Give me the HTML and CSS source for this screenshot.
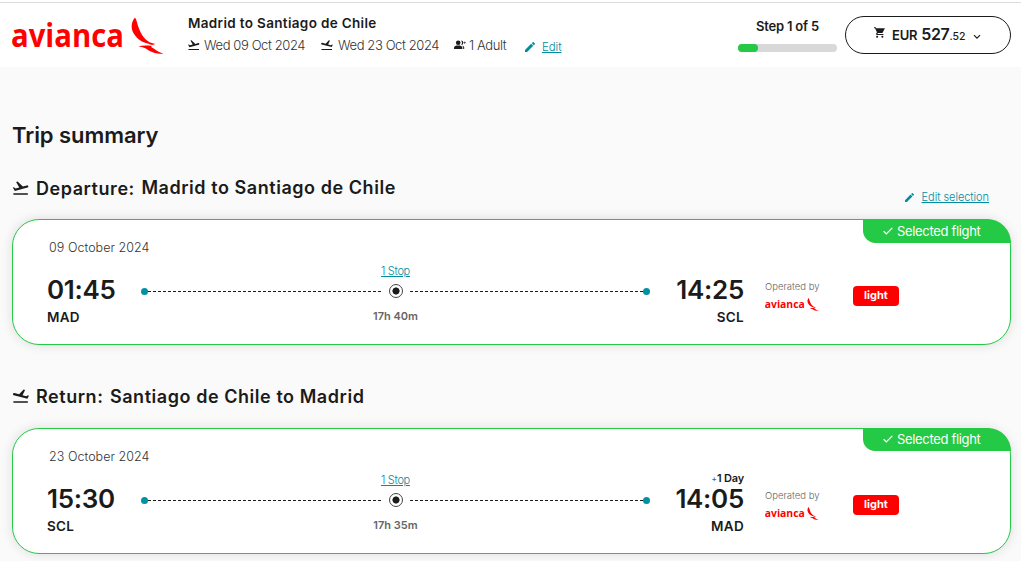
FILE: index.html
```html
<!DOCTYPE html>
<html lang="en">
<head>
  <meta charset="UTF-8" />
  <meta name="viewport" content="width=device-width, initial-scale=1.0" />
  <title>Trip summary</title>
  <link rel="stylesheet" href="styles.css">
</head>
<body>
  <svg class="sprite">
    <symbol id="takeoff" viewBox="2 3 21 18"><path d="M2.5 19h19v2h-19zm19.57-9.36c-.21-.8-1.04-1.28-1.84-1.06L14.92 10l-6.9-6.43-1.93.51 4.14 7.17-4.97 1.33-1.97-1.54-1.45.39 2.59 4.49 16.61-4.46c.81-.23 1.28-1.05 1.03-1.85z"/></symbol>
    <symbol id="landing" viewBox="2 3 21 18"><path d="M2.500 19h19v2h-19zM2 9.200c.21-.8 1.040-1.280 1.840-1.060L10 9.800l5.900-6.230 1.930.51-3.300 6.900 4.970 1.330 1.970-1.140 1.450.39-2 4.090L3 11.100c-.8-.2-1.200-1-1-1.900z"/></symbol>
    <symbol id="pencil" viewBox="3 3 18 18"><path d="M3 17.250V21h3.750L17.810 9.940l-3.750-3.750zM20.710 7.040a1 1 0 0 0 0-1.410l-2.340-2.340a1 1 0 0 0-1.410 0l-1.830 1.830 3.750 3.750z"/></symbol>
    <symbol id="bird" viewBox="0 0 33 37"><path d="M4 .5C1.500 3 .4 7 .7 10.700 1 14 2.500 16.500 4 18.300c1.500 2 3 3.600 5 5 2.500 1.800 5 2.700 8 3.200 2 1 4.500 1.800 7.700 1.700l-3.200-.9 3.300-.2c-2.500-.7-4.500-1.300-6.300-1.900-2.500-1.500-4.500-3.500-6.200-5.500-2-3-3.600-6-5-10C6 6.500 6 3.500 4 .5zM7.300 29.300c3 .7 5.700 1.400 8.400 2.600 3.300 2.500 7 4.500 16.800 5.100-3.500-1.300-6.500-3-9-4.900l-3.300-2.100.6-1c-4-.6-9-.7-13.500.3z"/></symbol>
    <symbol id="logo" viewBox="0 -8 152 48">
      <text x="-1" y="30" textLength="113" lengthAdjust="spacingAndGlyphs" font-family="Open Sans, Noto Sans, sans-serif" font-weight="700" font-size="32">avianca</text>
      <use href="#bird" x="119" y="0" width="33" height="37"/>
    </symbol>
    <symbol id="check" viewBox="0 0 10 8"><path d="M.7 4.300 3.300 6.900 9.300.9" fill="none" stroke="currentColor" stroke-width="1.300"/></symbol>
  </svg>

  <header class="topbar">
    <svg class="logo"><use href="#logo"/></svg>
    <div class="search">
      <div class="route">Madrid to Santiago de Chile</div>
      <div class="details">
        <span class="date"><svg class="plane"><use href="#takeoff"/></svg><span>Wed 09 Oct 2024</span></span>
        <span class="date"><svg class="plane"><use href="#landing"/></svg><span>Wed 23 Oct 2024</span></span>
        <span class="pax"><svg viewBox="0 0 12 10"><circle cx="4.200" cy="2.800" r="2.300"/><path d="M0 9V7.800C0 6 2 5.500 4.200 5.500S8.400 6 8.400 7.800V9zM7 .5a2.300 2.300 0 0 1 0 4.600 3.500 3.500 0 0 0 0-4.600zM8.200 5.700c1.500.4 2 1 2 2.100V9h-1V7.800c0-1-.3-1.500-1-2.100zM9.500 2.500h1v-1h.6v1h1v.6h-1v1h-.6v-1h-1z"/></svg><span>1 Adult</span></span>
        <a class="edit" href="#"><svg><use href="#pencil"/></svg><span>Edit</span></a>
      </div>
    </div>
    <div class="steps">
      <div class="steps-label">Step 1 of 5</div>
      <div class="steps-bar"><div class="steps-done"></div></div>
    </div>
    <button class="basket">
      <svg class="cart" viewBox="1 2 21 20"><path d="M7 18a2 2 0 1 0 0 4 2 2 0 0 0 0-4zM1 2v2h2l3.600 7.590-1.350 2.450C4.500 15.400 5.500 17 7 17h12v-2H7.400l1.100-2h7.450c.75 0 1.400-.4 1.750-1L21.800 4H5.200l-.9-2zm16 16a2 2 0 1 0 0 4 2 2 0 0 0 0-4z"/></svg>
      <span class="currency">EUR</span><span class="amount">527</span><span class="cents">.52</span>
      <svg class="chevron" viewBox="0 0 8 6"><path d="M1 1.200 4 4.200 7 1.200"/></svg>
    </button>
  </header>

  <main class="page">
    <h1>Trip summary</h1>

    <section class="trip">
      <div class="trip-head">
        <h2><svg><use href="#takeoff"/></svg><span class="way">Departure:</span><span class="cities">Madrid to Santiago de Chile</span></h2>
        <a class="edit-selection" href="#"><svg><use href="#pencil"/></svg><span>Edit selection</span></a>
      </div>
      <div class="card">
        <div class="selected"><svg><use href="#check"/></svg><span>Selected flight</span></div>
        <div class="day">09 October 2024</div>
        <div class="flight">
          <div class="from"><div class="time">01:45</div><div class="code">MAD</div></div>
          <div class="path">
            <a class="stops" href="#">1 Stop</a>
            <div class="line"><i class="dot"></i><i class="dash"></i><i class="stop"></i><i class="dash"></i><i class="dot"></i></div>
            <div class="duration">17h 40m</div>
          </div>
          <div class="to"><div class="time">14:25</div><div class="code">SCL</div></div>
          <div class="carrier"><span>Operated by</span><svg><use href="#logo"/></svg></div>
          <div class="fare">light</div>
        </div>
      </div>
    </section>

    <section class="trip">
      <div class="trip-head">
        <h2><svg><use href="#landing"/></svg><span class="way">Return:</span><span class="cities">Santiago de Chile to Madrid</span></h2>
      </div>
      <div class="card">
        <div class="selected"><svg><use href="#check"/></svg><span>Selected flight</span></div>
        <div class="day">23 October 2024</div>
        <div class="flight">
          <div class="from"><div class="time">15:30</div><div class="code">SCL</div></div>
          <div class="path">
            <a class="stops" href="#">1 Stop</a>
            <div class="line"><i class="dot"></i><i class="dash"></i><i class="stop"></i><i class="dash"></i><i class="dot"></i></div>
            <div class="duration">17h 35m</div>
          </div>
          <div class="to"><div class="next-day"><span>+</span>1 Day</div><div class="time">14:05</div><div class="code">MAD</div></div>
          <div class="carrier"><span>Operated by</span><svg><use href="#logo"/></svg></div>
          <div class="fare">light</div>
        </div>
      </div>
    </section>
  </main>
</body>
</html>
```
FILE: styles.css
```css
* { box-sizing: border-box; }
body { margin: 0; height: 561px; overflow: hidden; background: #fff; color: #1b1b1b; font-family: Inter, "Liberation Sans", sans-serif; }
svg { display: block; flex: none; fill: currentColor; }
symbol { overflow: visible; }
span, div, a { white-space: nowrap; }
.sprite { width: 0; height: 0; position: absolute; }

.topbar { display: flex; align-items: flex-start; height: 65px; margin-top: 2px; border-top: 1px solid #ddd; background: #fff; }
.logo { width: 152px; height: 48px; margin: 6px 0 0 12px; color: #f00; }
.search { width: 574px; padding: 11px 0 0 24px; }
.route { font-size: 13.500px; line-height: 18px; font-weight: 600; letter-spacing: 0.33px; }
.details { display: flex; align-items: center; height: 20px; margin-top: 3px; font-size: 13px; font-weight: 300; letter-spacing: -0.4px; color: #333; }
.date { display: flex; align-items: center; gap: 4px; width: 133px; }
.plane { width: 12px; height: 10px; color: #1b1b1b; }
.date + .date { gap: 5px; }
.pax { display: flex; align-items: center; gap: 3px; width: 71px; }
.pax svg { width: 12px; height: 10px; color: #1b1b1b; }
.edit { display: flex; align-items: center; gap: 7px; color: #008c9e; font-size: 11.500px; letter-spacing: -0.1px; padding-top: 3px; }
.edit svg { width: 10px; height: 10px; }
.steps { width: 99px; margin-top: 14px; }
.steps-label { text-align: center; font-size: 13px; line-height: 18px; font-weight: 600; letter-spacing: -0.2px; }
.steps-bar { height: 8px; margin-top: 9px; border-radius: 4px; background: #d8d8d8; }
.steps-done { width: 20px; height: 8px; border-radius: 4px; background: #24c945; }
.basket { display: flex; align-items: baseline; width: 166px; height: 38px; margin: 13px 0 0 8px; padding: 7px 0 0 28px; border: 1px solid #1b1b1b; border-radius: 19px; background: #fff; color: #1b1b1b; font-family: inherit; font-weight: 600; }
.cart { width: 11px; height: 11px; margin-right: 7px; position: relative; top: -2px; }
.currency { font-size: 13px; letter-spacing: -0.2px; margin-right: 4px; }
.amount { font-size: 16px; letter-spacing: -0.4px; }
.cents { font-size: 10.500px; font-weight: 500; }
.chevron { width: 8px; height: 6px; margin-left: 8px; fill: none; stroke: currentColor; stroke-width: 1.200; }

.page { height: 494px; padding: 53px 10px 0 12px; background: #fafafa; }
h1 { margin: 0; font-size: 22px; line-height: 30px; font-weight: 600; letter-spacing: -0.05px; }
.trip-head { display: flex; justify-content: space-between; height: 69px; padding-top: 25px; }
.trip + .trip { margin-top: 15px; }
.trip + .trip .trip-head { height: 68px; padding-top: 23px; }
h2 { display: flex; align-items: center; height: 26px; margin: 0; font-size: 18px; font-weight: 600; letter-spacing: 0.55px; }
h2 svg { width: 16px; height: 14px; margin: 0 7px 0 1px; }
.way { margin-right: 6.500px; }
.trip:not(.trip + .trip) .cities { padding-bottom: 2px; }
.edit-selection { display: flex; align-items: center; gap: 8px; height: 16px; margin: 14px 22px 0 0; color: #008c9e; font-size: 11px; font-weight: 300; letter-spacing: -0.05px; }
.edit-selection svg { width: 9px; height: 9px; }

.card { position: relative; height: 126px; padding: 19px 0 0 34px; border: 1px solid #24c945; border-radius: 27px; background: #fff; box-shadow: 0 0 12px rgba(0, 0, 0, .12); }
.selected { position: absolute; top: -1px; right: -1px; width: 148px; height: 24px; padding: 0 0 1px 20px; display: flex; align-items: center; gap: 4px; border-radius: 0 27px 0 14px; background: #24c945; color: #fff; font-size: 13px; letter-spacing: -0.33px; }
.trip + .trip .selected { height: 23px; }
.selected svg { width: 10px; height: 8px; }
.day { padding-left: 2px; font-size: 12.500px; line-height: 18px; font-weight: 300; letter-spacing: 0.05px; color: #333; }
.flight { display: flex; height: 87px; }
.from { width: 94px; padding-top: 16px; }
.time { font-size: 26px; line-height: 34px; font-weight: 600; letter-spacing: -0.3px; }
.code { font-size: 13.500px; line-height: 18px; margin-top: 1px; font-weight: 600; letter-spacing: 0.3px; }
.path { width: 509px; padding-top: 7px; text-align: center; }
.stops { display: block; height: 15px; color: #008c9e; font-size: 11px; line-height: 15px; font-weight: 300; letter-spacing: -0.3px; }
.line { display: flex; align-items: center; height: 18px; margin-top: 3px; }
.dot { width: 7px; height: 7px; border-radius: 50%; background: #0092a3; }
.dash { flex: 1; height: 1px; background: repeating-linear-gradient(90deg, #1b1b1b 0 3px, transparent 3px 5px); }
.stop { width: 14px; height: 14px; margin: 0 7px; border: 1px solid #444; border-radius: 50%; background: radial-gradient(circle, #1b1b1b 3.200px, transparent 3.900px); }
.duration { margin-top: 9px; font-size: 11px; line-height: 15px; font-weight: 600; color: #666; }
.to { position: relative; width: 94px; padding-top: 16px; text-align: right; }
.next-day { position: absolute; top: 6px; right: 0; font-size: 11px; line-height: 13px; font-weight: 600; letter-spacing: -0.2px; }
.next-day span { font-weight: 300; font-size: 9px; }
.carrier { width: 55px; margin-left: 21px; padding-top: 23px; color: #666; font-size: 9.500px; line-height: 13px; font-weight: 300; }
.carrier svg { width: 54px; height: 17px; margin-top: 2px; color: #f00; }
.fare { width: 46px; height: 20px; margin: 29px 0 0 33px; border-radius: 4px; background: #f00; color: #fff; text-align: center; font-size: 11px; line-height: 19px; font-weight: 700; }
```
